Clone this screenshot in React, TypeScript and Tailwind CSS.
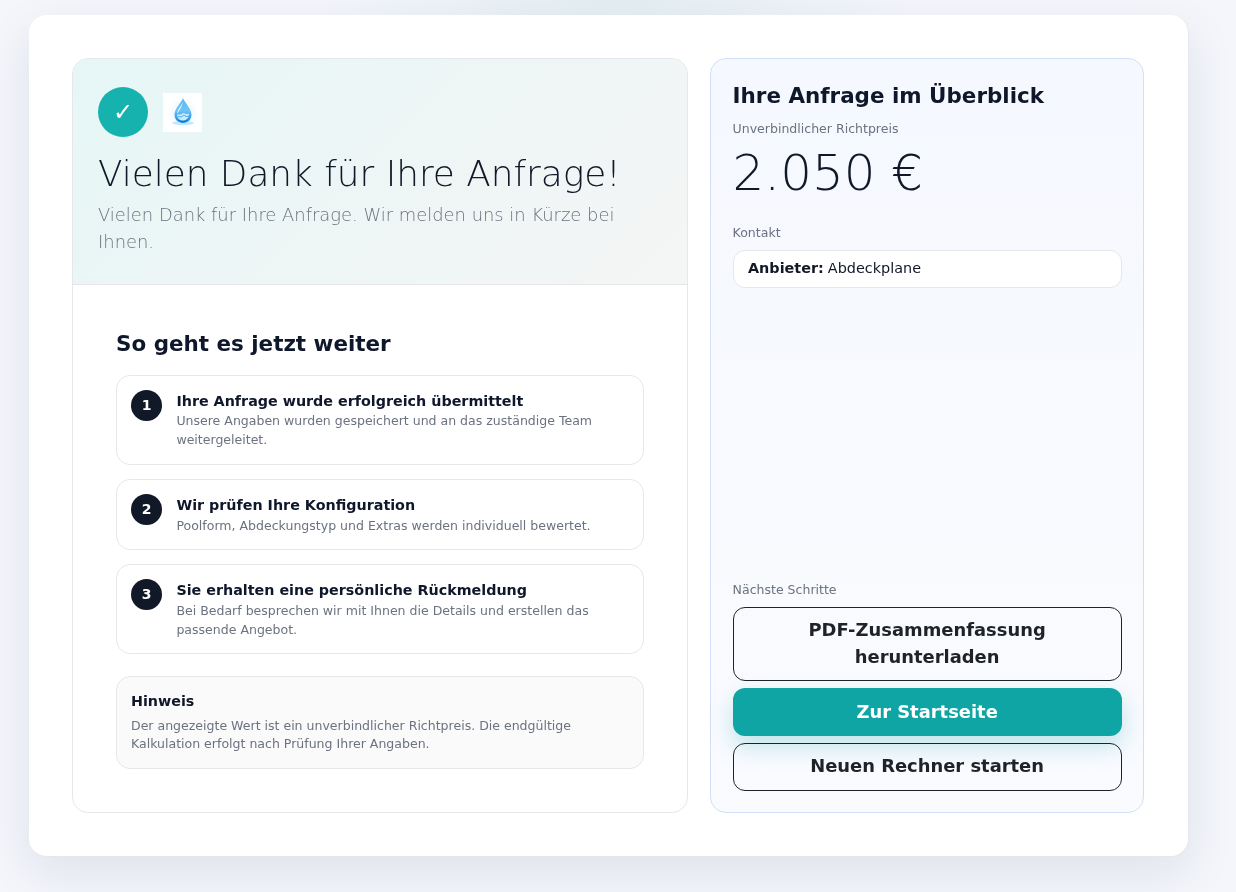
const steps = [
  {
    title: "Ihre Anfrage wurde erfolgreich übermittelt",
    text: "Unsere Angaben wurden gespeichert und an das zuständige Team weitergeleitet.",
  },
  {
    title: "Wir prüfen Ihre Konfiguration",
    text: "Poolform, Abdeckungstyp und Extras werden individuell bewertet.",
  },
  {
    title: "Sie erhalten eine persönliche Rückmeldung",
    text: "Bei Bedarf besprechen wir mit Ihnen die Details und erstellen das passende Angebot.",
  },
];

function DropLogo() {
  return (
    <div className="flex h-[39px] w-[39px] shrink-0 items-center justify-center bg-white">
      <svg width="39" height="39" viewBox="0 0 39 39">
        <defs>
          <linearGradient id="drop" x1="0" y1="0" x2="0" y2="1">
            <stop offset="0" stopColor="#5db8f2" />
            <stop offset="0.5" stopColor="#6cc3f6" />
            <stop offset="1" stopColor="#1587e2" />
          </linearGradient>
          <radialGradient id="halo" cx="0.5" cy="0.5" r="0.5">
            <stop offset="0" stopColor="#bfe6fb" />
            <stop offset="1" stopColor="#ffffff" />
          </radialGradient>
        </defs>
        <circle cx="20" cy="20" r="16" fill="url(#halo)" opacity="0.45" />
        <ellipse cx="20" cy="30" rx="11" ry="2" fill="#c4e7fb" />
        <path d="M20 5C18.2 10 11.5 15.5 11.5 21.8C11.5 26.6 15.2 30 20 30C24.8 30 28.5 26.6 28.5 21.8C28.5 15.5 21.8 10 20 5Z" fill="url(#drop)" />
        <path d="M20 8.5C18.6 12.5 14.5 16.5 14 21C16.5 17.5 19 14 20 8.5Z" fill="#e3f5fe" />
        <path d="M14 22.5C15.8 19.5 17.5 23 19.2 20.5C20.8 18.5 22.8 22.5 26 20.5C26.3 24.5 23.5 27.5 20 27.5C16.8 27.5 14.6 25.6 14 22.5Z" fill="#c9ecfd" />
        <path d="M14.5 24.5C16.4 21.8 17.7 25.3 19.5 23C21.4 20.8 23 25 25.8 22.8" fill="none" stroke="#2a97e8" strokeWidth="0.9" />
        <path d="M15.5 27.4C18 29 22.2 29 24.6 27.2" fill="none" stroke="#1277d2" strokeWidth="1" />
      </svg>
    </div>
  );
}

export default function App() {
  return (
    <div className="flex min-h-[892px] items-start justify-center overflow-hidden bg-[radial-gradient(ellipse_300px_60px_at_50%_0,#e3eef1_0,#f4f6fc_100%)] pl-[29px] pr-[48px] pt-[15px] font-['DejaVu_Sans',sans-serif]">
      <div className="flex h-[842px] w-[1160px] shrink-0 gap-[22px] rounded-[18px] border-r border-b border-[#e5e7eb] bg-white py-[43px] pl-[43px] pr-[43px] shadow-[0_16px_50px_rgba(15,23,42,0.09)] will-change-transform">
        <section className="flex w-[616px] shrink-0 flex-col overflow-hidden rounded-[16px] border border-[#e5e7eb] bg-white">
          <header className="h-[226px] border-b border-[#e5e7eb] bg-[linear-gradient(135deg,#e6f6f6,#f5f5f5)] px-[25px] pt-[28px]">
            <div className="flex items-center gap-[15px]">
              <div className="flex h-[50px] w-[50px] items-center justify-center rounded-full bg-[#16b3ae] text-[24px] text-white">✓</div>
              <DropLogo />
            </div>
            <h1 className="mt-[14px] text-[35.84px] font-extralight leading-[46px] text-[#111827]">Vielen Dank für Ihre Anfrage!</h1>
            <p className="mt-[4px] text-[17.92px] font-extralight leading-[27px] text-[#6b7280]">
              Vielen Dank für Ihre Anfrage. Wir melden uns in Kürze bei Ihnen.
            </p>
          </header>
          <div className="px-[43px] pt-[44px]">
            <h2 className="text-[21.44px] font-bold leading-[30px] text-[#0f172a]">So geht es jetzt weiter</h2>
            <div className="mt-[16px] flex flex-col gap-[14.4px]">
              {steps.map((step, i) => (
                <div key={i} className="flex gap-[14.4px] rounded-[14px] border border-[#e5e7eb] bg-white p-[14px]">
                  <div className="flex h-[31px] w-[31px] shrink-0 items-center justify-center rounded-full bg-[#111827] text-[14px] font-bold text-white">{i + 1}</div>
                  <div className="min-w-0 pb-[0.4px] pt-[0.8px]">
                    <div className="text-[14.3px] font-bold leading-[20.6px] text-[#0f172a]">{step.title}</div>
                    <div className="text-[12.54px] leading-[19px] text-[#6b7280]">{step.text}</div>
                  </div>
                </div>
              ))}
            </div>
            <div className="mt-[22px] rounded-[14px] border border-[#e5e7eb] bg-[#fafafa] px-[14px] pb-[15.8px] pt-[14px]">
              <div className="text-[14.3px] font-bold leading-[21px] text-[#0f172a]">Hinweis</div>
              <p className="mt-[5px] text-[12.54px] leading-[17.6px] text-[#6b7280]">
                Der angezeigte Wert ist ein unverbindlicher Richtpreis. Die endgültige Kalkulation erfolgt nach Prüfung Ihrer Angaben.
              </p>
            </div>
          </div>
        </section>
        <aside className="flex w-[434px] shrink-0 flex-col rounded-[16px] border border-[#d2dffa] bg-[linear-gradient(180deg,#f5f8fe,#fafbff)] pb-[21px] pl-[21.6px] pr-[21.4px] pt-[22px]">
          <h2 className="text-[21.44px] font-bold leading-[30px] text-[#0f172a]">Ihre Anfrage im Überblick</h2>
          <div className="mt-[9px] text-[12.54px] leading-[18px] text-[#6b7280]">Unverbindlicher Richtpreis</div>
          <div className="mt-[2px] text-[49.92px] font-extralight leading-[66px] text-[#111827]">2.050 €</div>
          <div className="mt-[18px] text-[12.54px] leading-[18px] text-[#6b7280]">Kontakt</div>
          <div className="mt-[8px] flex h-[38px] items-center rounded-[12px] border border-[#e5e7eb] bg-white px-[14.4px] text-[14.4px] text-[#111827]">
            <b className="mr-[4px] font-bold">Anbieter:</b> Abdeckplane
          </div>
          <div className="mt-auto text-[12.54px] leading-[18px] text-[#6b7280]">Nächste Schritte</div>
          <div className="mt-[8px] flex flex-col gap-[7px]">
            <button className="h-[74px] rounded-[12px] border border-[#1f2329] px-[40px] pb-[2px] text-[17.92px] font-bold leading-[27px] text-[#1f2329]">PDF-Zusammenfassung herunterladen</button>
            <button className="relative z-0 h-[48px] rounded-[12px] bg-[#0fa5a5] text-[17.92px] font-bold text-white shadow-[0_10px_24px_rgba(15,165,165,0.25)]">Zur Startseite</button>
            <button className="relative h-[48px] rounded-[12px] border border-[#1f2329] pb-[2px] text-[17.92px] font-bold text-[#1f2329]">Neuen Rechner starten</button>
          </div>
        </aside>
      </div>
    </div>
  );
}
